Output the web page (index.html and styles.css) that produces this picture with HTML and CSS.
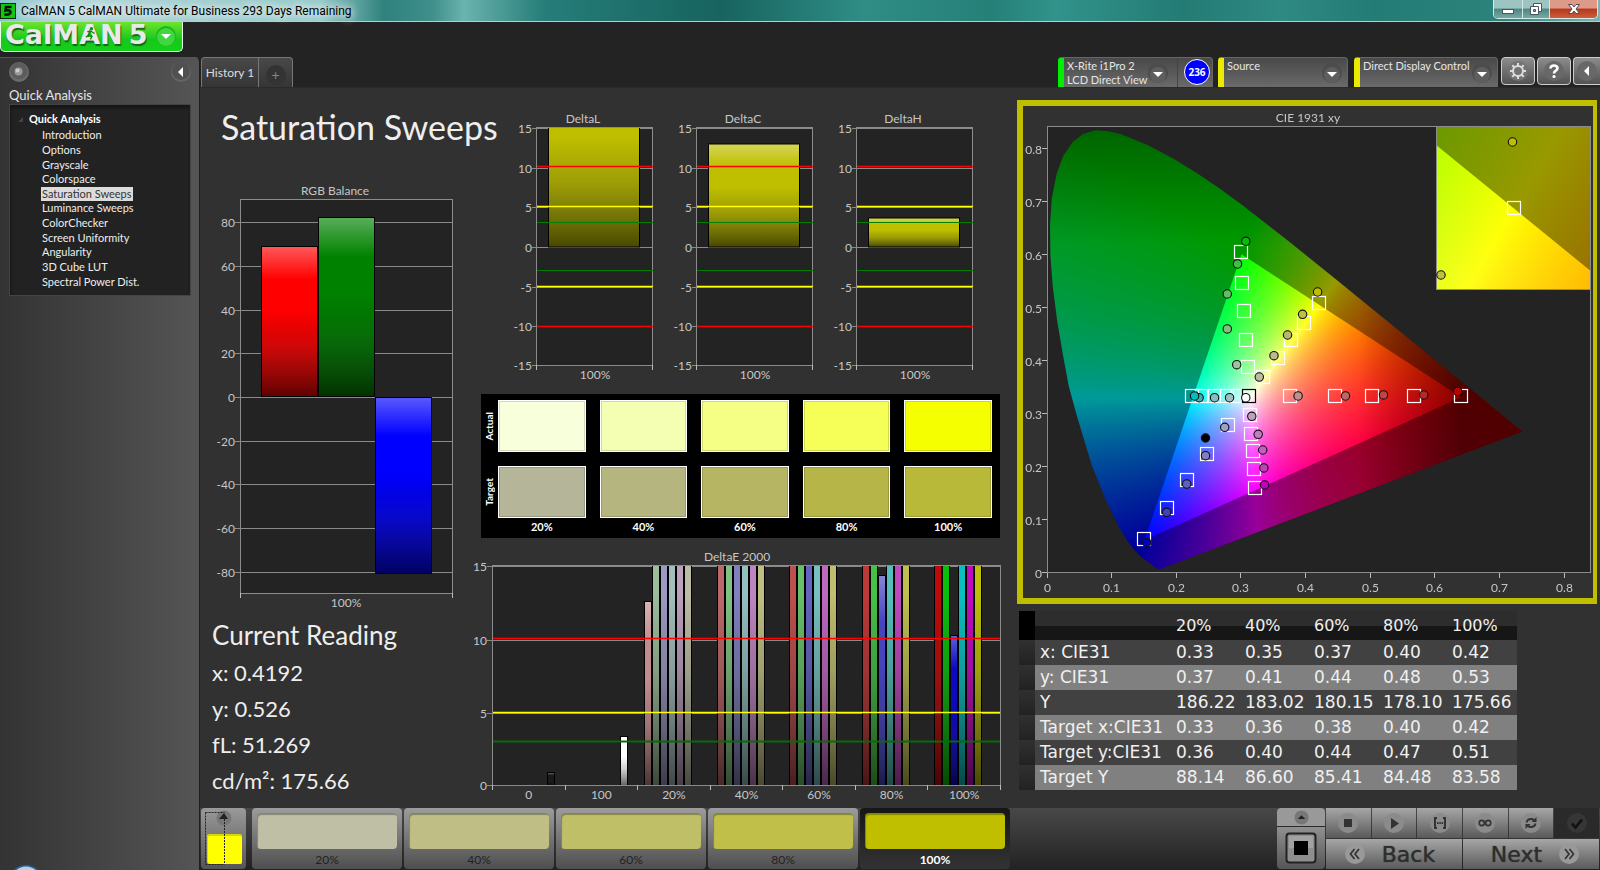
FILE: index.html
```html
<!DOCTYPE html>
<html lang="en">
<head>
<meta charset="utf-8">
<title>CalMAN 5</title>
<link rel="stylesheet" href="styles.css">
</head>
<body>
<div class="app">
  <header class="titlebar">
    <svg class="titlebar-icon" viewBox="0 0 16 16" aria-hidden="true"><rect width="16" height="16" fill="#042b04"/><rect x="1" y="1" width="14" height="14" fill="#0ec813"/><path d="M11.5 4H6L5.500 7.500Q10.500 6.500 10.500 9.500Q10 12 4.500 11.500" fill="none" stroke="#021402" stroke-width="2.600"/></svg>
    <span class="titlebar-text">CalMAN 5 CalMAN Ultimate for Business 293 Days Remaining</span>
    <div class="window-buttons">
      <button class="win-btn" aria-label="Minimize"><svg viewBox="0 0 14 14"><rect x="1.500" y="7.500" width="11" height="4" fill="#fff" stroke="#4a5560"/></svg></button>
      <button class="win-btn win-max" aria-label="Restore"><svg viewBox="0 0 14 14"><path d="M4.500 1.500h8v8h-8z" fill="#fff" stroke="#4a5560"/><path d="M1.500 4.500h8v8h-8z" fill="#fff" stroke="#4a5560"/><path d="M4.500 7.500h2v2h-2z" fill="#7fa5a3" stroke="#4a5560"/></svg></button>
      <button class="win-btn win-close" aria-label="Close"><svg viewBox="0 0 14 14"><path d="M1.500 2.500h3.500l2 2.500 2-2.500h3.500L9 7l3.500 4.500H9L7 9l-2 2.500H1.500L5 7z" fill="#fff" stroke="#5a4a50"/></svg></button>
    </div>
  </header>

  <div class="body">
    <div class="topbar">
      <button class="logo" aria-label="CalMAN 5 menu">
        <span>CalMAN</span><span class="logo-five">5</span>
        <svg class="logo-runner" viewBox="0 0 12 14" aria-hidden="true"><circle cx="7" cy="1.800" r="1.800"/><path d="M6.500 4L4 8L7.500 10L6 13.500M4.500 8.500L1 11M6.500 4.500L10.500 7M6 4.500L2.500 5" fill="none" stroke="#0b8a10" stroke-width="1.500"/></svg>
        <svg class="logo-arrow" viewBox="0 0 20 20" aria-hidden="true"><circle cx="10" cy="10" r="10" fill="#18b81c"/><circle cx="10" cy="11" r="9" fill="#3fd63f"/><path d="M5 8h10l-5 5z" fill="#fff"/></svg>
      </button>
    </div>

    <aside class="sidebar">
      <div class="sidebar-tools">
        <button class="round-btn" aria-label="Record"><svg viewBox="0 0 20 20"><circle cx="10" cy="10" r="10" fill="#6c6c6c"/><circle cx="10" cy="9" r="8.500" fill="#5c5c5c"/><circle cx="9.500" cy="9.500" r="4" fill="#999"/><circle cx="8.500" cy="8.500" r="2" fill="#ccc"/></svg></button>
        <button class="round-btn" aria-label="Collapse sidebar"><svg viewBox="0 0 20 20"><circle cx="10" cy="10" r="10" fill="#666"/><circle cx="10" cy="9" r="9" fill="#505050"/><path d="M12 5v10L7 10z" fill="#fff"/></svg></button>
      </div>
      <h2 class="sidebar-title">Quick Analysis</h2>
      <nav class="tree">
        <div class="tree-root"><svg viewBox="0 0 6 6"><path d="M6 0v6H0z" fill="#444"/></svg><b>Quick Analysis</b></div>
        <ul class="tree-list">
          <li><a href="#">Introduction</a></li>
          <li><a href="#">Options</a></li>
          <li><a href="#">Grayscale</a></li>
          <li><a href="#">Colorspace</a></li>
          <li><a href="#" class="current">Saturation Sweeps</a></li>
          <li><a href="#">Luminance Sweeps</a></li>
          <li><a href="#">ColorChecker</a></li>
          <li><a href="#">Screen Uniformity</a></li>
          <li><a href="#">Angularity</a></li>
          <li><a href="#">3D Cube LUT</a></li>
          <li><a href="#">Spectral Power Dist.</a></li>
        </ul>
      </nav>
      <svg class="orb" viewBox="0 0 30 5" aria-hidden="true"><ellipse cx="15" cy="16" rx="17" ry="16" fill="#2a5f93"/><ellipse cx="15" cy="16.500" rx="15" ry="15" fill="#b9cfe2"/></svg>
    </aside>

    <div class="toolbar">
      <div class="tabs">
        <button class="tab">History 1</button>
        <button class="tab tab-add" aria-label="Add tab"><span>+</span></button>
      </div>
      <div class="devices">
        <div class="device device-meter">
          <button class="device-btn" aria-haspopup="menu">X-Rite i1Pro 2<br>LCD Direct View
            <svg class="drop" viewBox="0 0 20 20"><circle cx="10" cy="10" r="10" fill="#4c4c4c"/><circle cx="10" cy="12" r="8" fill="#5e5e5e"/><path d="M5 9h10l-5 5z" fill="#fff"/></svg>
          </button>
          <span class="counter">236</span>
        </div>
        <div class="device device-source">
          <select aria-label="Source"><option>Source</option></select>
          <svg class="drop" viewBox="0 0 20 20"><circle cx="10" cy="10" r="10" fill="#4c4c4c"/><circle cx="10" cy="12" r="8" fill="#5e5e5e"/><path d="M5 9h10l-5 5z" fill="#fff"/></svg>
        </div>
        <div class="device device-display">
          <select aria-label="Direct Display Control"><option>Direct Display Control</option></select>
          <svg class="drop" viewBox="0 0 20 20"><circle cx="10" cy="10" r="10" fill="#4c4c4c"/><circle cx="10" cy="12" r="8" fill="#5e5e5e"/><path d="M5 9h10l-5 5z" fill="#fff"/></svg>
        </div>
        <button class="tool-btn" aria-label="Settings"><svg viewBox="0 0 22 22"><circle cx="11" cy="11" r="10" fill="#747474"/><g fill="none" stroke="#ddd"><circle cx="11" cy="11" r="5" stroke-width="2"/><path d="M11 3v3M11 16v3M3 11h3M16 11h3M5.300 5.300l2.200 2.200M14.500 14.500l2.200 2.200M16.700 5.300l-2.200 2.200M7.500 14.500l-2.200 2.200" stroke-width="2"/></g></svg></button>
        <button class="tool-btn" aria-label="Help"><svg viewBox="0 0 22 22"><circle cx="11" cy="11" r="10" fill="#686868"/><path d="M7.500 8.500Q7.500 5.500 11 5.500Q14.500 5.500 14.500 8.300Q14.500 10 12.500 11Q11 11.800 11 13.500" fill="none" stroke="#fff" stroke-width="2.600"/><circle cx="11" cy="16.500" r="1.600" fill="#fff"/></svg></button>
        <button class="tool-btn tool-last" aria-label="Collapse"><svg viewBox="0 0 22 22"><circle cx="11" cy="11" r="10" fill="#686868"/><path d="M13 6v10l-5-5z" fill="#fff"/></svg></button>
      </div>
    </div>

    <main class="workspace">
      <section class="col col-left">
        <h1>Saturation Sweeps</h1>
        <svg class="chart" id="rgb" viewBox="0 0 270 430" role="img" aria-label="RGB Balance"></svg>
        <div class="reading">
          <h2>Current Reading</h2>
          <p>x: 0.4192</p>
          <p>y: 0.526</p>
          <p>fL: 51.269</p>
          <p>cd/m²: 175.66</p>
        </div>
      </section>

      <section class="col col-mid">
        <div class="deltas">
          <svg class="chart" id="deltaL" viewBox="0 0 160 286" role="img" aria-label="DeltaL"></svg>
          <svg class="chart" id="deltaC" viewBox="0 0 160 286" role="img" aria-label="DeltaC"></svg>
          <svg class="chart" id="deltaH" viewBox="0 0 160 286" role="img" aria-label="DeltaH"></svg>
        </div>
        <div class="swatches">
          <span class="side-label">Actual</span>
          <i class="sw a20"></i><i class="sw a40"></i><i class="sw a60"></i><i class="sw a80"></i><i class="sw a100"></i>
          <span class="side-label">Target</span>
          <i class="sw t20"></i><i class="sw t40"></i><i class="sw t60"></i><i class="sw t80"></i><i class="sw t100"></i>
          <span></span>
          <span>20%</span><span>40%</span><span>60%</span><span>80%</span><span>100%</span>
        </div>
        <svg class="chart" id="deltaE" viewBox="0 0 540 258" role="img" aria-label="DeltaE 2000"></svg>
      </section>

      <section class="col col-right">
        <div class="cie">
          <canvas id="gamut" width="570" height="492"></canvas>
          <svg id="cie" viewBox="0 0 570 492" role="img" aria-label="CIE 1931 xy"></svg>
        </div>
        <table class="data">
          <thead>
            <tr><th class="grip"></th><th></th><th>20%</th><th>40%</th><th>60%</th><th>80%</th><th>100%</th></tr>
          </thead>
          <tbody>
            <tr><td class="grip"></td><th>x: CIE31</th><td>0.33</td><td>0.35</td><td>0.37</td><td>0.40</td><td>0.42</td></tr>
            <tr><td class="grip"></td><th>y: CIE31</th><td>0.37</td><td>0.41</td><td>0.44</td><td>0.48</td><td>0.53</td></tr>
            <tr><td class="grip"></td><th>Y</th><td>186.22</td><td>183.02</td><td>180.15</td><td>178.10</td><td>175.66</td></tr>
            <tr><td class="grip"></td><th>Target x:CIE31</th><td>0.33</td><td>0.36</td><td>0.38</td><td>0.40</td><td>0.42</td></tr>
            <tr><td class="grip"></td><th>Target y:CIE31</th><td>0.36</td><td>0.40</td><td>0.44</td><td>0.47</td><td>0.51</td></tr>
            <tr><td class="grip"></td><th>Target Y</th><td>88.14</td><td>86.60</td><td>85.41</td><td>84.48</td><td>83.58</td></tr>
          </tbody>
        </table>
      </section>
    </main>

    <footer class="bottombar">
      <button class="layout-btn" aria-label="Pattern layout">
        <svg viewBox="0 0 45 61"><circle cx="23" cy="10" r="7.500" fill="#777"/><path d="M18 11l5-6 4 6z" fill="#222"/><rect x="6" y="26" width="35" height="30" rx="2" fill="#d8d800"/><rect x="7" y="28" width="34" height="28" rx="2" fill="#ff0"/><path d="M4.500 4.500h19M4.500 4.500v52M23.500 8v48M4.500 56.500h19" stroke="#222" stroke-dasharray="2 1" fill="none"/></svg>
      </button>
      <div class="levels">
        <button class="level"><i class="chip c20"></i>20%</button>
        <button class="level"><i class="chip c40"></i>40%</button>
        <button class="level"><i class="chip c60"></i>60%</button>
        <button class="level"><i class="chip c80"></i>80%</button>
        <button class="level active"><i class="chip c100"></i>100%</button>
      </div>
      <div class="pattern">
        <button class="pattern-up" aria-label="Expand"><svg viewBox="0 0 16 16"><circle cx="8" cy="8" r="7.500" fill="#777"/><path d="M4 9.500l4-4 4 4z" fill="#222"/></svg></button>
        <button class="pattern-cur" aria-label="Window pattern"><svg viewBox="0 0 32 32"><rect x="1.500" y="1.500" width="29" height="29" rx="3" fill="#8e8e8e" stroke="#222" stroke-width="2"/><rect x="4" y="4" width="24" height="12" fill="#a2a2a2"/><rect x="9" y="9" width="14" height="14" fill="#000"/></svg></button>
      </div>
      <div class="transport">
        <button class="t-btn" aria-label="Stop"><svg viewBox="0 0 20 20"><circle cx="10" cy="10" r="10" fill="#8b8b8b"/><rect x="6" y="6" width="8" height="8" fill="#333"/></svg></button>
        <button class="t-btn" aria-label="Play"><svg viewBox="0 0 20 20"><circle cx="10" cy="10" r="10" fill="#8b8b8b"/><path d="M7 5l8 5.500L7 16z" fill="#333"/></svg></button>
        <button class="t-btn" aria-label="Read series"><svg viewBox="0 0 20 20"><circle cx="10" cy="10" r="10" fill="#8b8b8b"/><path d="M7 5H5v10h2M13 5h2v10h-2" fill="none" stroke="#333" stroke-width="2"/><path d="M7 10h1.500M9.300 10h1.500M11.600 10h1.500" stroke="#333" stroke-width="2"/></svg></button>
        <button class="t-btn" aria-label="Read continuously"><svg viewBox="0 0 20 20"><circle cx="10" cy="10" r="10" fill="#8b8b8b"/><circle cx="6.800" cy="10" r="2.600" fill="none" stroke="#333" stroke-width="1.600"/><circle cx="13.200" cy="10" r="2.600" fill="none" stroke="#333" stroke-width="1.600"/></svg></button>
        <button class="t-btn" aria-label="Refresh"><svg viewBox="0 0 20 20"><circle cx="10" cy="10" r="10" fill="#8b8b8b"/><path d="M5.500 9.500Q6.500 5.500 11 6L13 7M14.500 10.500Q13.500 14.500 9 14L7 13" fill="none" stroke="#333" stroke-width="2"/><path d="M15.500 4v5h-5zM4.500 16v-5h5z" fill="#333"/></svg></button>
        <button class="t-btn dark" aria-label="Accept"><svg viewBox="0 0 20 20"><circle cx="10" cy="10" r="10" fill="#363636"/><path d="M5 10.500l3.500 4L15 6.500" fill="none" stroke="#111" stroke-width="2.600"/></svg></button>
        <button class="nav-btn nav-back"><svg viewBox="0 0 20 20"><circle cx="10" cy="10" r="10" fill="#999"/><path d="M9.500 5L5.500 10l4 5M14 5l-4 5 4 5" fill="none" stroke="#333" stroke-width="1.700"/></svg>Back</button>
        <button class="nav-btn nav-next">Next<svg viewBox="0 0 20 20"><circle cx="10" cy="10" r="10" fill="#999"/><path d="M6 5l4 5-4 5M10.500 5l4 5-4 5" fill="none" stroke="#333" stroke-width="1.700"/></svg></button>
      </div>
    </footer>
  </div>
</div>
<script src="charts.js"></script>
</body>
</html>
```
FILE: styles.css
```css
* { box-sizing: border-box; }
body { margin: 0; background: #232323; color: #e6e6e6; font-family: Lato, "Open Sans", sans-serif; font-size: 13px; }
button, select { font: inherit; color: inherit; border: 0; padding: 0; margin: 0; background: none; }
svg { display: block; }
h1, h2, p, ul { margin: 0; padding: 0; font-weight: 400; }
ul { list-style: none; }

.app { display: flex; flex-direction: column; min-height: 100vh; overflow: hidden; }

.titlebar { display: flex; height: 22px; border-bottom: 1px solid #a8d5d2; background: linear-gradient(90deg, #86c3ca 0, #b6d8dc 4%, #a3cfd0 12%, #98cccb 20%, #2f827e 24%, #3f8f8b 27%, #6ab3ae 29%, #267d79 34%, #17635f 45%, #2f8d86 54%, #258078 62%, #31938b 66%, #237b74 74%, #2f8a83 80%, #237c75 86%, #2b837c 94%, #7fb3ae 100%); }
.titlebar-icon { width: 16px; height: 16px; margin-top: 3px; }
.titlebar-text { margin-left: 5px; font-family: Roboto, "Open Sans", sans-serif; font-size: 12px; line-height: 22px; color: #000; text-shadow: 0 0 8px #fff, 0 0 8px #fff; }
.window-buttons { display: flex; height: 19px; margin-left: auto; margin-right: 2px; border: 1px solid #d5ebe9; border-top: 0; border-radius: 0 0 5px 5px; overflow: hidden; }
.win-btn { width: 29px; display: flex; justify-content: center; align-items: center; background: linear-gradient(#9dc4c1 0 45%, #4d8682 50%, #76a9a5); border-right: 1px solid #cfe6e4; }
.win-btn svg { width: 14px; height: 14px; }
.win-max { width: 27px; }
.win-close { width: 47px; border-right: 0; background: linear-gradient(#dd9a88 0 45%, #b5381e 50%, #cf5c3a); }

.body { flex: 1; display: grid; grid-template-columns: 200px minmax(0, 1fr); grid-template-rows: 35px 30px 1fr 66px; }

.topbar { grid-column: 1 / 3; }
.logo { position: relative; display: flex; align-items: center; width: 183px; height: 30px; padding-left: 4px; border: 1px solid #e8ffe8; border-top: 0; border-radius: 0 0 5px 5px; background: linear-gradient(#6fe32f, #18c81c 60%, #12d017); font-family: "DejaVu Sans", sans-serif; font-weight: 700; font-size: 27px; line-height: 26px; padding-bottom: 3px; color: #e9e9e9; text-shadow: 1px 2px 1px #14661a; }
.logo-five { margin-left: 6px; }
.logo-runner { position: absolute; left: 84px; top: 5px; width: 11px; height: 13px; fill: #0b8a10; }
.logo-arrow { position: absolute; right: 6px; top: 4px; width: 20px; height: 20px; }

.sidebar { grid-row: 2 / 5; display: flex; flex-direction: column; padding: 4px 8px 0 9px; border-top: 1px solid #555; border-radius: 0 5px 0 0; background: linear-gradient(90deg, #333, #555); border-right: 1px solid #1e1e1e; }
.sidebar-tools { display: flex; justify-content: space-between; }
.round-btn, .round-btn svg { width: 20px; height: 20px; }
.sidebar-title { margin-top: 4px; font-size: 13px; line-height: 18px; }
.tree { height: 192px; padding: 5px 0 0 8px; background: #222; border: 1px solid #444; box-shadow: inset 1px 3px 3px #161616; font-size: 11px; }
.tree-root { display: flex; align-items: center; gap: 6px; line-height: 18px; color: #fff; }
.tree-root svg { width: 5px; height: 5px; }
.tree-list { display: grid; grid-auto-rows: 1fr; height: 161px; padding-left: 23px; }
.tree-list li { display: flex; align-items: center; }
.tree-list a { color: #eee; text-decoration: none; line-height: 14px; padding: 0 1px; }
.tree-list .current { background: #dcdcdc; color: #333; }
.orb { width: 30px; height: 5px; margin: auto 0 0 2px; }

.toolbar { display: flex; justify-content: space-between; padding-left: 1px; }
.tabs { display: flex; border: 1px solid #777; border-bottom: 0; border-radius: 4px 4px 0 0; background: linear-gradient(#494949, #353535); }
.tab { width: 57px; color: #ddd; font-size: 12px; border-right: 1px solid #777; }
.tab-add { width: 33px; border: 0; padding-top: 4px; display: flex; align-items: center; justify-content: center; }
.tab-add span { width: 20px; height: 20px; border-radius: 10px; background: #333; color: #888; line-height: 19px; font-size: 14px; }
.devices { display: flex; }
.device { position: relative; display: flex; border: 1px solid #666; border-left: 6px solid #ebeb00; border-bottom: 0; border-radius: 4px 4px 0 0; background: linear-gradient(#494949, #6a6a6a); font-size: 11px; line-height: 14px; }
.device-meter { width: 155px; border-left-color: #00ee00; margin-right: 5px; }
.device-source { width: 130px; margin-right: 6px; }
.device-display { width: 144px; margin-right: 3px; }
.device-btn { position: relative; width: 114px; text-align: left; padding-left: 3px; border-right: 1px solid #444; line-height: 14px; white-space: nowrap; }
.device select { width: 100%; height: 15px; padding-left: 3px; appearance: none; line-height: 14px; }
.drop { position: absolute; right: 5px; top: 5px; width: 20px; height: 20px; }
.device-btn .drop { right: 9px; }
.counter { width: 26px; height: 26px; margin: 1px 0 0 6px; border: 1px solid #fff; border-radius: 13px; background: #00f; color: #fff; font: 700 10px/24px "Open Sans", sans-serif; text-align: center; }
.tool-btn { width: 34px; height: 28px; margin-right: 2px; border: 1px solid #ccc; border-radius: 4px; background: linear-gradient(#8c8c8c, #525252); display: flex; align-items: center; justify-content: center; }
.tool-btn svg { width: 22px; height: 22px; }
.tool-last { width: 27px; margin-right: 0; border-right: 0; border-radius: 4px 0 0 4px; }

.workspace { display: grid; grid-template-columns: minmax(0, 270fr) minmax(0, 540fr) minmax(0, 590fr); align-content: start; background: #313131; border-top: 1px solid #2a2a2a; }
.chart { width: 100%; height: auto; }
.chart text, .cie text { font-size: 12px; fill: #c6c6c6; }
.col-left h1 { padding: 19px 0 0 21px; font-size: 34px; line-height: 40px; height: 92px; color: #eee; white-space: nowrap; }
.reading { padding: 10px 0 0 12px; color: #eee; }
.reading h2 { font-size: 26px; line-height: 30px; margin-bottom: 5px; }
.reading p { font-size: 22px; line-height: 36px; }
.deltas { display: grid; grid-template-columns: 1fr 1fr 1fr; padding: 12px 30px 0; }
.swatches { display: grid; grid-template-columns: 3px repeat(5, 1fr); grid-template-rows: 52px 52px 14px; gap: 14px; margin: 8px 10px 7px 11px; height: 144px; padding: 6px 8px 0 0; background: #000; justify-items: center; color: #fff; font-size: 11px; font-weight: 700; }
.swatches span { line-height: 1; }
.swatches span:nth-last-child(-n+5) { margin-top: -11px; }
.side-label { writing-mode: vertical-rl; transform: rotate(180deg); font-size: 10px; align-self: center; justify-self: start; margin-left: 3px; }
.sw { width: 100%; border: 1px solid #fff; box-shadow: inset 0 0 0 1px rgba(0, 0, 0, .15); }
.a20 { background: #f8ffdb; } .a40 { background: #f5ffb3; } .a60 { background: #f5ff85; } .a80 { background: #f5ff57; } .a100 { background: #f6ff00; }
.t20 { background: #b5b59a; } .t40 { background: #b5b580; } .t60 { background: #b5b563; } .t80 { background: #b5b548; } .t100 { background: #b9b939; }

.col-right { padding: 12px 3px 0 7px; }
.cie { display: grid; border: 6px solid #bfbf00; border-right-width: 4px; }
.cie canvas, .cie svg { grid-area: 1 / 1; width: 100%; height: auto; }
.data { border-collapse: collapse; margin: 7px 0 0 2px; font-family: "DejaVu Sans", Verdana, sans-serif; font-size: 17px; color: #f0f0f0; }
.data th, .data td { width: 69px; height: 25px; padding: 0; font-weight: 400; text-align: left; line-height: 25px; white-space: nowrap; }
.data .grip { width: 16px; background: linear-gradient(#303030, #222); }
.data thead th { height: 29px; font-size: 16px; background: linear-gradient(#2d2d2d 50%, #161616 50%); }
.data thead .grip { background: #000; }
.data th:nth-child(2) { width: 141px; padding-left: 5px; }
.data th:last-child, .data td:last-child { width: 65px; }
.data tbody tr { background: #414141; }
.data tbody tr:nth-child(even) { background: #808080; }

.bottombar { display: flex; padding: 4px 0 1px 1px; background: linear-gradient(#313131 4px, #484848 4px, #222 100%); }
.layout-btn { width: 45px; border-radius: 4px; background: linear-gradient(#9a9a9a, #555); margin-right: 6px; }
.layout-btn svg { width: 45px; height: 61px; }
.levels { display: flex; gap: 2px; }
.level { width: 150px; padding: 5px 5px 0; border-radius: 4px; background: linear-gradient(#9c9c9c, #4e4e4e); color: #222; font-size: 12px; line-height: 22px; display: flex; flex-direction: column; align-items: center; justify-content: flex-start; }
.level.active { background: linear-gradient(#161616, #333); color: #fff; font-weight: 700; }
.chip { width: 100%; height: 36px; flex: none; border-radius: 4px; box-shadow: inset 1px 2px 1px rgba(0, 0, 0, .3); }
.c20 { background: #bfbfa5; } .c40 { background: #bfbf85; } .c60 { background: #bfbf68; } .c80 { background: #bfbf4a; } .c100 { background: #bfbf00; }
.pattern { width: 48px; margin-left: auto; margin-right: 1px; display: flex; flex-direction: column; gap: 1px; border-radius: 4px; overflow: hidden; background: #2a2a2a; }
.pattern button { display: flex; justify-content: center; align-items: center; background: #999; }
.pattern-up { height: 18px; }
.pattern button.pattern-cur { flex: 1; background: linear-gradient(#909090, #555); }
.pattern-up svg { width: 15px; height: 15px; }
.pattern-cur svg { width: 32px; height: 32px; }
.transport { width: 273px; margin-right: 1px; display: grid; grid-template-columns: repeat(6, 1fr); grid-template-rows: 30px 30px; gap: 1px; }
.t-btn, .nav-btn { display: flex; justify-content: center; align-items: center; background: linear-gradient(#a6a6a6, #5a5a5a); color: #2e2e2e; }
.t-btn svg, .nav-btn svg { width: 20px; height: 20px; }
.t-btn.dark { background: #2a2a2a; }
.nav-btn { grid-column: span 3; gap: 17px; font-family: "DejaVu Sans", Verdana, sans-serif; font-size: 22px; text-shadow: 0 0 1px #2e2e2e; }
.nav-back { padding-right: 8px; }
.nav-next { padding-left: 8px; }
```
FILE: charts.js
```js
const NS = 'http://www.w3.org/2000/svg';

function add(parent, name, attrs, text) {
  const el = document.createElementNS(NS, name);
  for (const k in attrs) el.setAttribute(k, attrs[k]);
  if (text !== undefined) el.textContent = text;
  parent.appendChild(el);
  return el;
}

function line(svg, x1, y1, x2, y2, stroke, w) {
  add(svg, 'line', { x1, y1, x2, y2, stroke, 'stroke-width': w || 1 });
}

function label(svg, x, y, text, anchor) {
  add(svg, 'text', { x, y, 'text-anchor': anchor || 'middle' }, text);
}

function shade(svg, id) {
  const defs = add(svg, 'defs', {});
  const g = add(defs, 'linearGradient', { id, x1: 0, y1: 0, x2: 0, y2: 1 });
  [[0, '#fff', 0.35], [0.22, '#fff', 0], [0.42, '#000', 0], [0.65, '#222', 0.2], [1, '#000', 0.62]]
    .forEach(s => add(g, 'stop', { offset: s[0], 'stop-color': s[1], 'stop-opacity': s[2] }));
  return defs;
}

function bar(parent, x, y, w, h, color, shadeId) {
  add(parent, 'rect', { x, y, width: w, height: h, fill: color });
  add(parent, 'rect', { x, y, width: w, height: h, fill: `url(#${shadeId})`, stroke: '#000' });
}

function frame(svg, x, y, w, h) {
  add(svg, 'rect', { x, y, width: w, height: h, fill: '#232323', stroke: '#8c8c8c' });
}

/* RGB balance */
(function () {
  const svg = document.getElementById('rgb');
  shade(svg, 'shRgb');
  label(svg, 135, 15, 'RGB Balance');
  frame(svg, 40.5, 19.5, 212, 394);
  for (let v = 80; v >= -80; v -= 20) {
    const y = Math.round(217 - v * 2.187) + 0.5;
    line(svg, 35, y, 252, y, '#8a8a8a');
    label(svg, 35, y + 4, v, 'end');
  }
  bar(svg, 61.5, 66.5, 56, 150, '#f00', 'shRgb');
  bar(svg, 118.5, 37.5, 56, 179, '#008200', 'shRgb');
  bar(svg, 175.5, 217.5, 56, 176, '#00f', 'shRgb');
  line(svg, 40.5, 413, 40.5, 418, '#bbb');
  line(svg, 252.5, 413, 252.5, 418, '#bbb');
  label(svg, 146, 427, '100%');
})();

/* DeltaL, DeltaC, DeltaH */
[['deltaL', 'DeltaL', 190], ['deltaC', 'DeltaC', 103], ['deltaH', 'DeltaH', 29]].forEach(([id, name, h]) => {
  const svg = document.getElementById(id);
  const defs = shade(svg, 'sh' + id);
  add(add(defs, 'clipPath', { id: 'cp' + id }), 'rect', { x: 37, y: 28, width: 115, height: 238 });
  label(svg, 83, 23, name);
  frame(svg, 36.5, 27.5, 116, 238);
  for (let v = 15; v >= -15; v -= 5) {
    const y = v === -15 ? 265.5 : Math.round(147 - v * 7.93) + 0.5;
    line(svg, 32, y, 152, y, '#8a8a8a');
    label(svg, 32, y + 4, v, 'end');
  }
  const g = add(svg, 'g', { 'clip-path': `url(#cp${id})` });
  bar(g, 48.5, 147 - h, 91, h, '#bfbf00', 'sh' + id);
  [[66.5, 'red'], [106.5, 'yellow'], [122.5, 'green'], [170.5, 'green'], [186.5, 'yellow'], [226.5, 'red']]
    .forEach(([y, c]) => line(svg, 37, y, 153, y, c, c === 'green' ? 1 : 1.5));
  line(svg, 36.5, 265, 36.5, 270, '#bbb');
  line(svg, 152.5, 265, 152.5, 270, '#bbb');
  label(svg, 95, 279, '100%');
});

/* DeltaE 2000 */
(function () {
  const svg = document.getElementById('deltaE');
  const defs = shade(svg, 'shE');
  add(add(defs, 'clipPath', { id: 'cpE' }), 'rect', { x: 23, y: 21, width: 507, height: 219 });
  label(svg, 267, 16, 'DeltaE 2000');
  frame(svg, 22.5, 20.5, 508, 220);
  [[15, 21.5], [10, 95.5], [5, 168.5], [0, 240.5]].forEach(([v, y]) => {
    line(svg, 17, y, 530, y, '#8a8a8a');
    label(svg, 17, y + 4, v, 'end');
  });
  const g = add(svg, 'g', { 'clip-path': 'url(#cpE)' });
  const step = 508 / 7;
  const rows = [
    ['#c38c8c', '#9bbd9b', '#9b9bc3', '#a5bdbd', '#bda0bd', '#bdbda5'],
    ['#bd6868', '#82c082', '#8080c0', '#95bfbf', '#bf85bf', '#bfbf85'],
    ['#bd5050', '#68c068', '#6464c0', '#78bfbf', '#bf68bf', '#bfbf6e'],
    ['#bf3838', '#48c048', '#4545c0', '#55bfbf', '#bf48bf', '#bfbf50'],
    ['#bf0a0a', '#0abf0a', '#0a0abf', '#0abfbf', '#bf0abf', '#bfbf0a']
  ];
  const short = { '0-0': 184, '3-2': 210, '4-2': 150 };
  rows.forEach((row, r) => row.forEach((c, i) => {
    const h = short[r + '-' + i] || 330;
    bar(g, Math.round(22.5 + step * (r + 2) + 6.5 + i * 8) + 0.5, 240.5 - h, 7, h, c, 'shE');
  }));
  bar(g, 77.5, 227.5, 7, 13, '#1a1a1a', 'shE');
  bar(g, 150.5, 191.5, 7, 49, '#fff', 'shE');
  line(svg, 23, 93.5, 530, 93.5, 'red', 1.5);
  line(svg, 23, 167.5, 530, 167.5, 'yellow', 1.5);
  line(svg, 23, 196.5, 530, 196.5, '#0a6a0a', 2);
  ['0', '100', '20%', '40%', '60%', '80%', '100%'].forEach((t, i) => label(svg, 22.5 + step * (i + 0.5), 254, t));
  for (let i = 0; i <= 7; i++) {
    const x = Math.round(22 + step * i) + 0.5;
    line(svg, x, 240, x, 245, '#bbb');
  }
})();

/* Chromaticity diagram */
(function () {
  const X = x => 24.5 + x * 646.5;
  const Y = y => 466 - y * 529.7;
  const locus = [[.1741, .005], [.1714, .0051], [.1644, .0109], [.1566, .0177], [.144, .0297], [.1355, .0399], [.1241, .0578], [.1096, .0868], [.0913, .1327], [.0687, .2007], [.0454, .295], [.0330, .3500], [.0235, .4127], [.0150, .4740], [.0082, .5384], [.0045, .5960], [.0039, .6548], [.0065, .7040], [.0139, .7502], [.0240, .7850], [.0389, .812], [.0550, .8270], [.0743, .8338], [.0940, .8320], [.1142, .8262], [.1547, .8059], [.1929, .7816], [.2296, .7543], [.2658, .7243], [.3016, .6923], [.3731, .6245], [.4441, .5547], [.5125, .4866], [.5752, .4242], [.627, .3725], [.6658, .334], [.6915, .3083], [.719, .2809], [.7347, .2653]];
  const tri = [[.64, .33], [.3, .6], [.15, .06]];
  const ctx = document.getElementById('gamut').getContext('2d');

  function color(x, y, k) {
    const z = 1 - x - y;
    const r = Math.max(0, 3.2406 * x - 1.5372 * y - 0.4986 * z);
    const g = Math.max(0, -0.9689 * x + 1.8758 * y + 0.0415 * z);
    const b = Math.max(0, 0.0557 * x - 0.204 * y + 1.057 * z);
    const m = Math.max(r, g, b);
    const dimR = 1 - 0.48 * Math.min(1, Math.max(0, (x - 0.48) / 0.16));
    const dimG = 1 - 0.35 * Math.min(1, Math.max(0, (y - 0.62) / 0.22));
    const s = 255 * k * dimR * dimG;
    return [r, g, b].map(c => s * Math.pow(c / m, 0.95));
  }

  function field(w, h, toX, toY, k) {
    const c = document.createElement('canvas');
    c.width = w;
    c.height = h;
    const cx = c.getContext('2d');
    const img = cx.createImageData(w, h);
    for (let j = 0; j < h; j++) for (let i = 0; i < w; i++) {
      const rgb = color(toX(i), toY(j), k);
      const o = (j * w + i) * 4;
      img.data[o] = rgb[0];
      img.data[o + 1] = rgb[1];
      img.data[o + 2] = rgb[2];
      img.data[o + 3] = 255;
    }
    cx.putImageData(img, 0, 0);
    return c;
  }

  function clipped(points, fx, fy, src, ox, oy) {
    ctx.save();
    ctx.beginPath();
    points.forEach((p, i) => ctx[i ? 'lineTo' : 'moveTo'](fx(p[0]), fy(p[1])));
    ctx.closePath();
    ctx.clip();
    ctx.drawImage(src, ox, oy);
    ctx.restore();
  }

  ctx.fillStyle = '#232323';
  ctx.fillRect(24, 21, 544, 446);
  const ux = i => (i - 24.5) / 646.5, uy = j => (466 - j) / 529.7;
  clipped(locus, X, Y, field(570, 492, ux, uy, 0.6), 0, 0);
  clipped(tri, X, Y, field(570, 492, ux, uy, 1), 0, 0);

  const IX = x => 490.5 + (x - 0.4193) * 3180;
  const IY = y => 102 - (y - 0.5053) * 3267;
  const ix = i => 0.4193 + (i + 414 - 490.5) / 3180, iy = j => 0.5053 + (102 - j - 21) / 3267;
  ctx.drawImage(field(154, 162, ix, iy, 0.6), 414, 21);
  ctx.save();
  ctx.beginPath();
  ctx.rect(414, 21, 154, 162);
  ctx.clip();
  clipped(tri, IX, IY, field(154, 162, ix, iy, 1), 414, 21);
  ctx.restore();

  const svg = document.getElementById('cie');
  label(svg, 285, 16, 'CIE 1931 xy');
  add(svg, 'rect', { x: 24.5, y: 20.5, width: 543, height: 446, fill: 'none', stroke: '#8c8c8c' });
  add(svg, 'rect', { x: 413.5, y: 20.5, width: 154, height: 163, fill: 'none', stroke: '#8c8c8c' });
  for (let i = 0; i <= 8; i++) {
    const t = i ? '0.' + i : '0';
    const y = i ? Math.round(Y(i / 10)) + 0.5 : 466.5;
    const x = Math.round(X(i / 10)) - 0.5;
    line(svg, 19, y, 24, y, '#bbb');
    label(svg, 19, y + 5, t, 'end');
    line(svg, x, 467, x, 472, '#bbb');
    label(svg, x, 486, t);
  }
  const squares = [[.2997, .6041], [.3014, .545], [.3037, .4927], [.3067, .438], [.4196, .5085], [.3963, .4701], [.3771, .438], [.3102, .3864], [.3561, .404], [.3329, .3681], [.224, .3323], [.2397, .3323], [.2578, .3323], [.277, .3323], [.295, .3323], [.3753, .3323], [.444, .3323], [.5022, .3323], [.5668, .3323], [.6396, .3323], [.3136, .2958], [.3154, .2599], [.3171, .2278], [.3189, .1938], [.3206, .158], [.2793, .2775], [.2461, .2228], [.2159, .1737], [.185, .1208], [.1495, .0623]];
  const square = (x, y, c) => add(svg, 'rect', { x: Math.round(x) - 6.5, y: Math.round(y) - 6.5, width: 13, height: 13, fill: 'none', stroke: c, 'stroke-width': 1.2 });
  squares.forEach(p => square(X(p[0]), Y(p[1]), '#fff'));
  square(X(.3119), Y(.3323), '#000');
  const dots = [[.3067, .6243, '#00c000'], [.2939, .5815, '#40bf40'], [.2781, .5248, '#60bf60'], [.2781, .4588, '#80c080'], [.2927, .3914, '#a0c0a0'], [.4178, .5286, '#bfbf00'], [.3946, .4864, '#bfbf40'], [.3713, .4474, '#bdb867'], [.3503, .4084, '#bdb988'], [.3276, .3681, '#bdbba0'], [.2345, .329, '#40b0b0'], [.2275, .3323, '#00bfbf'], [.2584, .329, '#80c0c0'], [.2816, .329, '#a0c0c0'], [.3067, .329, '#fff'], [.3876, .3323, '#c09090'], [.4609, .3323, '#c06565'], [.5197, .3342, '#c04545'], [.582, .3342, '#c02525'], [.6344, .3411, '#c00000'], [.316, .2939, '#c0a0c0'], [.3259, .2599, '#c080c0'], [.3329, .2303, '#c060c0'], [.3346, .1964, '#c040c0'], [.3358, .1643, '#c000c0'], [.2741, .2731, '#a0a0c0'], [.2444, .2196, '#8080c0'], [.2153, .1661, '#6060c0'], [.1844, .1127, '#4040c0'], [.1536, .0554, '#0000c0'], [.2444, .253, '#000']];
  const dot = (x, y, c) => add(svg, 'circle', { cx: x, cy: y, r: 4.2, fill: c, stroke: '#111', 'stroke-width': 1.1 });
  dots.forEach(p => dot(X(p[0]), Y(p[1]), p[2]));
  square(490.5, 102, '#fff');
  dot(489.5, 36, '#bfbf00');
  dot(418, 169, '#bfbf40');
})();
```
